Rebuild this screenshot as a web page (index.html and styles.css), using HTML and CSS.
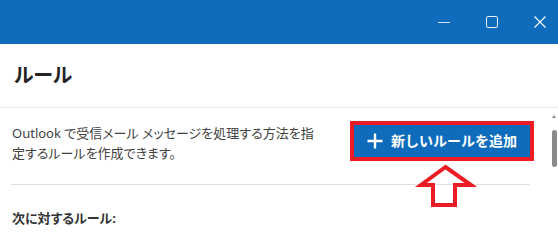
FILE: index.html
```html
<!DOCTYPE html>
<html lang="ja">
<head>
<meta charset="utf-8">
<title>ルール</title>
<link rel="stylesheet" href="styles.css">
</head>
<body>
<div class="window">
  <div class="titlebar">
    <svg class="cap" viewBox="0 0 12 12" width="12" height="12"><line x1="0" y1="6.5" x2="12" y2="6.5" stroke="#cfe0f3" stroke-width="1"/></svg>
    <svg class="cap" viewBox="0 0 12 12" width="12" height="12"><rect x="0.5" y="0.5" width="11" height="11" rx="1.5" fill="none" stroke="#e6eff9" stroke-width="1"/></svg>
    <svg class="cap" viewBox="0 0 12 12" width="12" height="12"><path d="M0.5 0.5 L11.5 11.5 M11.5 0.5 L0.5 11.5" stroke="#ffffff" stroke-width="1.1"/></svg>
  </div>
  <div class="header"><h1 class="title">ルール</h1></div>
  <div class="main">
    <div class="content">
      <div class="intro">
        <p class="desc">Outlook で受信メール メッセージを処理する方法を指定するルールを作成できます。</p>
        <div class="btn-wrap">
          <button class="add-btn">
            <svg class="plus" viewBox="0 0 16 16" width="16" height="16"><path d="M8 0.5 V15.5 M0.5 8 H15.5" stroke="#ffffff" stroke-width="2.4" fill="none"/></svg>
            <span>新しいルールを追加</span>
          </button>
          <svg class="arrow" viewBox="0 0 64 48" width="64" height="48"><polygon points="31.5,5 7,23 19,23 19,43 41,43 41,23 57,23" fill="none" stroke="#ed1c24" stroke-width="4" stroke-linejoin="miter"/></svg>
        </div>
      </div>
      <hr class="sep">
      <h2 class="label">次に対するルール:</h2>
    </div>
    <div class="scrollbar">
      <div class="sb-up"></div>
      <div class="sb-thumb"></div>
    </div>
  </div>
</div>
</body>
</html>
```
FILE: styles.css
```css
* { box-sizing: border-box; }
html, body { margin: 0; padding: 0; }
body {
  width: 558px;
  height: 239px;
  overflow: hidden;
  background: #ffffff;
  font-family: "Noto Sans", "Noto Sans CJK JP", sans-serif;
  font-feature-settings: "palt";
}
.window { width: 558px; height: 239px; display: flex; flex-direction: column; }
.titlebar {
  height: 44px;
  flex: none;
  background: #0f6cbd;
  display: flex;
  align-items: center;
  justify-content: flex-end;
  gap: 36px;
  padding-right: 12px;
}
.cap { display: block; }
.header {
  height: 64px;
  flex: none;
  border-bottom: 1px solid #e6e6e6;
  display: flex;
  align-items: center;
  padding-left: 14px;
}
.title {
  margin: 0;
  font-size: 20px;
  font-weight: 600;
  color: #242424;
  line-height: 28px;
}
.main { flex: 1; display: flex; min-height: 0; }
.content { flex: 1; padding: 15px 16px 0 11px; }
.intro { display: flex; justify-content: space-between; align-items: flex-start; }
.desc {
  margin: 0;
  width: 308px;
  padding-left: 1px;
  font-size: 13px;
  line-height: 20px;
  color: #424242;
}
.btn-wrap { position: relative; margin-top: 2px; }
.btn-wrap::after {
  content: "";
  position: absolute;
  inset: -4px;
  border: 4px solid #ed1c24;
  pointer-events: none;
}
.add-btn {
  width: 176px;
  height: 32px;
  border: none;
  border-radius: 0;
  background: #0f6cbd;
  color: #ffffff;
  display: flex;
  align-items: center;
  gap: 8px;
  padding: 0 0 0 13px;
  font-family: "Noto Sans", "Noto Sans CJK JP", sans-serif;
  font-size: 14px;
  font-weight: 700;
  line-height: 20px;
}
.plus { display: block; flex: none; }
.arrow { position: absolute; left: 60px; top: 37px; }
.sep { margin: 21px 0 0 0; border: none; border-top: 1px solid #e0e0e0; height: 0; }
.label {
  margin: 23px 0 0 1px;
  font-size: 13px;
  line-height: 20px;
  font-weight: 700;
  color: #333333;
}
.scrollbar {
  width: 12px;
  flex: none;
  display: flex;
  flex-direction: column;
  align-items: flex-end;
  padding: 7px 1px 0 0;
}
.sb-up {
  width: 0; height: 0;
  margin-right: 1px;
  border-left: 2.5px solid transparent;
  border-right: 2.5px solid transparent;
  border-bottom: 3px solid #8a8a8a;
}
.sb-thumb {
  margin-top: 12px;
  width: 5px;
  height: 37px;
  border-radius: 3px;
  background: #8a8a8a;
}
```
